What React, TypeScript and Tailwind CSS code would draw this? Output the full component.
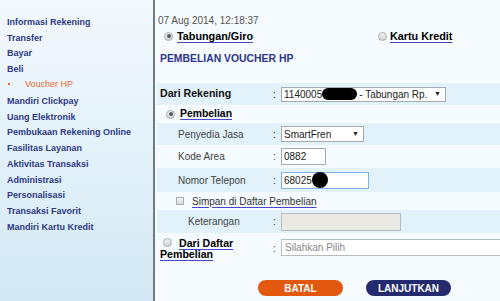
import React from "react";

const sideFont = { fontFamily: '"Liberation Sans", Arial, sans-serif' };

function Radio({ checked }: { checked?: boolean }) {
  return (
    <div className="w-[9px] h-[9px] rounded-full border border-[#a9adb1] bg-gradient-to-b from-[#f4f4f4] to-[#cfd2d4] flex items-center justify-center shrink-0">
      {checked && <div className="w-[4px] h-[4px] rounded-full bg-[#555a5e]" />}
    </div>
  );
}

function Row({
  bg,
  h,
  label,
  labelClass,
  children,
}: {
  bg: string;
  h: string;
  label: React.ReactNode;
  labelClass?: string;
  children?: React.ReactNode;
}) {
  return (
    <div className={`flex items-center ${bg} ${h}`}>
      <div className={`w-[114px] shrink-0 ${labelClass ?? ""}`}>{label}</div>
      <div className="w-[10px] shrink-0 pl-[2px] text-[#333]">:</div>
      <div className="flex-1 flex items-center">{children}</div>
    </div>
  );
}

export default function App() {
  const items1 = ["Informasi Rekening", "Transfer", "Bayar", "Beli"];
  const items2 = [
    "Mandiri Clickpay",
    "Uang Elektronik",
    "Pembukaan Rekening Online",
    "Fasilitas Layanan",
    "Aktivitas Transaksi",
    "Administrasi",
    "Personalisasi",
    "Transaksi Favorit",
    "Mandiri Kartu Kredit",
  ];
  return (
    <div
      className="w-[500px] h-[301px] overflow-hidden flex bg-[#f5fbfe] text-[10px]"
      style={sideFont}
    >
      {/* Sidebar */}
      <div className="w-[153px] shrink-0 h-full bg-gradient-to-b from-[#f3f9fd] to-[#d3e9f5] pt-[15px] pl-[7px] font-bold text-[9px] text-[#2f3a86]">
        {items1.map((t) => (
          <div key={t} className="h-[15.7px] leading-[15.7px] whitespace-nowrap">
            {t}
          </div>
        ))}
        <div className="h-[12px] leading-[12px] flex items-center text-[#e8692d] font-normal">
          <div className="w-[2px] h-[2px] bg-[#e8692d] ml-[1px] mr-[15px]" />
          Voucher HP
        </div>
        <div className="h-[4.35px]" />
        {items2.map((t) => (
          <div key={t} className="h-[15.7px] leading-[15.7px] whitespace-nowrap">
            {t}
          </div>
        ))}
      </div>
      <div className="w-[2px] shrink-0 h-full bg-[#6f7a81]" />

      {/* Main */}
      <div className="flex-1 flex flex-col pt-[14px] text-[#333]">
        <div className="h-[14px] leading-[14px] pl-[3px] text-[#555]">
          07 Aug 2014, 12:18:37
        </div>
        <div className="h-[14px] mt-[1px] flex items-center">
          <div className="ml-[9px]">
            <Radio checked />
          </div>
          <span className="ml-[4px] font-bold text-[10.8px] text-black underline decoration-[#4b46c6] underline-offset-2">
            Tabungan/Giro
          </span>
          <div className="ml-[125px]">
            <Radio />
          </div>
          <span className="ml-[3px] font-bold text-[10.8px] text-black underline decoration-[#4b46c6] underline-offset-2">
            Kartu Kredit
          </span>
        </div>
        <div className="h-[14px] leading-[14px] mt-[9px] pl-[5px] font-bold text-[10.4px] text-[#2f3586]">
          PEMBELIAN VOUCHER HP
        </div>

        <div className="mt-[17px] ml-[2px] flex flex-col">
          <Row
            bg="bg-[#e2f2fa]"
            h="h-[22px]"
            label="Dari Rekening"
            labelClass="pl-[3px] font-bold text-[10.6px] text-[#111]"
          >
            <div className="w-[165px] h-[15px] ml-[0px] bg-white border border-[#a6abb0] flex items-center pl-[2px] text-[#222]">
              <span>1140005</span>
              <div className="w-[35px] h-[12px] rounded-full bg-black" />
              <span className="ml-[2px]">- Tabungan Rp.</span>
              <span className="ml-auto mr-[4px] text-[7px]">▼</span>
            </div>
          </Row>

          <div className="h-[18px] flex items-center">
            <div className="ml-[9px]">
              <Radio checked />
            </div>
            <span className="ml-[5px] font-bold text-[10.4px] text-black underline decoration-[#4b46c6] underline-offset-2">
              Pembelian
            </span>
          </div>

          <Row bg="bg-[#e2f2fa]" h="h-[22px]" label="Penyedia Jasa" labelClass="pl-[21px] text-[#444]">
            <div className="w-[83px] h-[16px] bg-white border border-[#a6abb0] flex items-center pl-[2px] text-[#222]">
              <span>SmartFren</span>
              <span className="ml-auto mr-[4px] text-[7px]">▼</span>
            </div>
          </Row>

          <Row bg="bg-[#f5fbfe]" h="h-[23px]" label="Kode Area" labelClass="pl-[21px] text-[#444]">
            <div className="w-[45px] h-[17px] bg-white border border-[#a6abb0] flex items-center pl-[2px] text-[#222]">
              0882
            </div>
          </Row>

          <Row bg="bg-[#e2f2fa]" h="h-[24px]" label="Nomor Telepon" labelClass="pl-[21px] text-[#444]">
            <div className="w-[88px] h-[17px] bg-white border border-[#7cb2e8] flex items-center pl-[2px] text-[#222]">
              <span>68025</span>
              <div className="w-[16px] h-[16px] rounded-full bg-black" />
            </div>
          </Row>

          <div className="h-[18px] flex items-center">
            <div className="ml-[19px] w-[8px] h-[8px] border border-[#a9adb1] bg-gradient-to-b from-[#f4f4f4] to-[#d6d8da]" />
            <span className="ml-[8px] text-[#333] underline decoration-[#4b46c6] underline-offset-2">
              Simpan di Daftar Pembelian
            </span>
          </div>

          <Row bg="bg-[#e2f2fa]" h="h-[23px]" label="Keterangan" labelClass="pl-[31px] text-[#444]">
            <div className="w-[120px] h-[18px] bg-[#ebe9e4] border border-[#b9bcbf]" />
          </Row>

          <div className="flex items-start h-[30px] pt-[5px]">
            <div className="w-[114px] shrink-0 pl-[3px] font-bold text-[10.6px] text-black leading-[11px]">
              <div className="flex items-center">
                <div className="ml-[3px] -mt-[3px]">
                  <Radio />
                </div>
                <span className="ml-[7px] underline decoration-[#4b46c6] underline-offset-2">Dari Daftar</span>
              </div>
              <div className="underline decoration-[#4b46c6] underline-offset-2">Pembelian</div>
            </div>
            <div className="w-[10px] shrink-0 pl-[2px] text-[#333] mt-[3px]">:</div>
            <div className="flex-1 h-[17px] mt-[1px] bg-white border border-[#b9bcbf] -mr-[4px] flex items-center pl-[3px] text-[#8a8a8a]">
              Silahkan Pilih
            </div>
          </div>

          <div className="flex mt-[17px] pl-[101px]">
            <div className="w-[85px] h-[16px] rounded-full bg-[#e2580f] text-white font-bold text-[10px] flex items-center justify-center">
              BATAL
            </div>
            <div className="ml-[23px] w-[85px] h-[16px] rounded-full bg-[#232a6e] text-white font-bold text-[10px] flex items-center justify-center">
              LANJUTKAN
            </div>
          </div>
        </div>
      </div>
    </div>
  );
}
